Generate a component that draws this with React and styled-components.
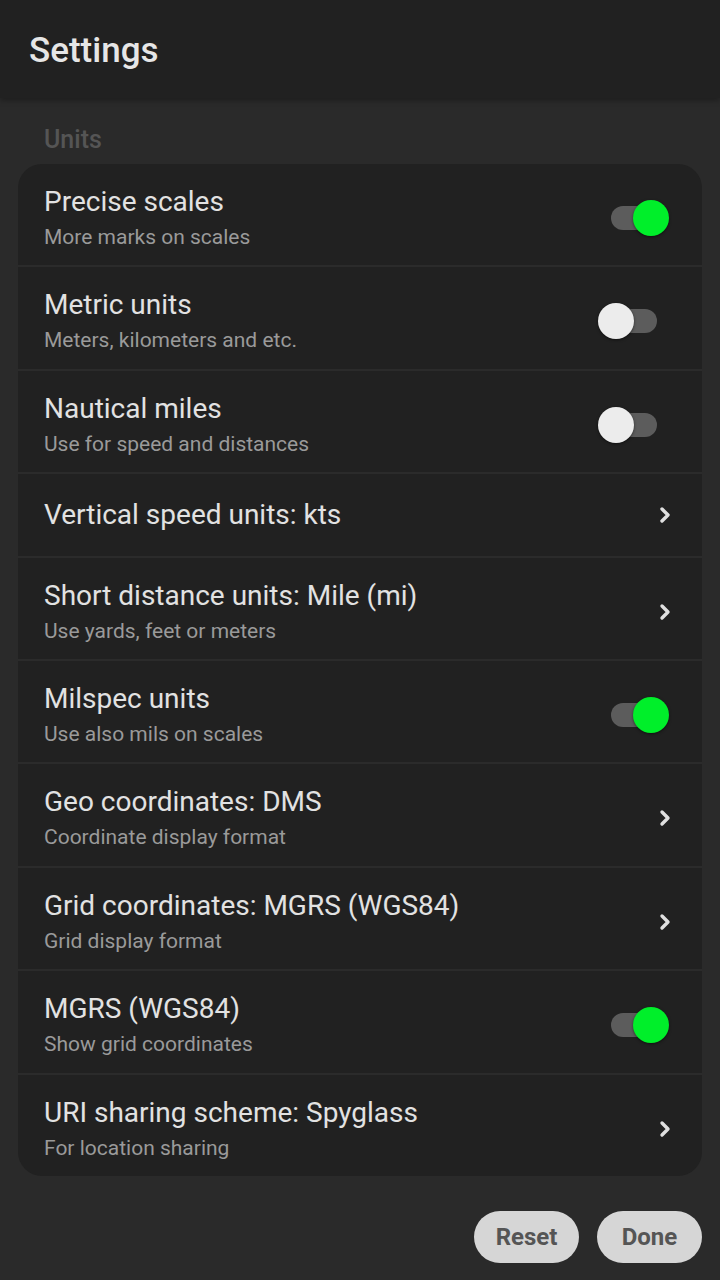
import React from "react";
import styled, { createGlobalStyle } from "styled-components";

const GlobalStyle = createGlobalStyle`
  html, body {
    margin: 0;
    padding: 0;
    background: #2a2a2a;
    font-family: Roboto, "Noto Sans", sans-serif;
  }
`;

const Screen = styled.div`
  width: 720px;
  height: 1280px;
  display: flex;
  flex-direction: column;
  background: #2a2a2a;
  overflow: hidden;
`;

const TopBar = styled.header`
  height: 98px;
  background: #212121;
  display: flex;
  align-items: center;
  padding: 2px 29px 0;
  box-sizing: border-box;
  box-shadow: 0 2px 6px rgba(0, 0, 0, 0.35);
  h1 {
    margin: 0;
    font-size: 35px;
    font-weight: 500;
    color: #e6e6e6;
  }
`;

const Body = styled.main`
  flex: 1;
  padding: 0 18px;
  display: flex;
  flex-direction: column;
`;

const SectionLabel = styled.div`
  font-size: 25px;
  font-weight: 500;
  color: #555;
  padding: 27px 26px 9px;
  line-height: 30px;
`;

const Card = styled.section`
  background: #212121;
  border-radius: 24px;
  overflow: hidden;
`;

const Row = styled.div`
  display: flex;
  align-items: center;
  padding: ${(p) => (p.$single ? "24px 26px 23.4px" : "21px 26px 14.4px")};
  & + & {
    border-top: 2px solid #2b2b2b;
  }
`;

const Texts = styled.div`
  flex: 1;
  min-width: 0;
`;

const Title = styled.div`
  font-size: 28px;
  line-height: 34px;
  color: #e2e2e2;
`;

const Subtitle = styled.div`
  font-size: 21px;
  line-height: 28px;
  margin-top: 4px;
  color: #9a9a9a;
`;

const Track = styled.div`
  position: relative;
  width: 46px;
  height: 24px;
  border-radius: 12px;
  background: #5c5c5c;
  margin-right: 19px;
`;

const Knob = styled.div`
  position: absolute;
  top: -6px;
  left: ${(p) => (p.$on ? "22px" : "-13px")};
  width: 36px;
  height: 36px;
  border-radius: 50%;
  background: ${(p) => (p.$on ? "#00ef2a" : "#ececec")};
  box-shadow: 0 1px 3px rgba(0, 0, 0, 0.5);
`;

const Chevron = styled.svg`
  width: 14px;
  height: 18px;
  margin-right: 4px;
`;

const Actions = styled.div`
  display: flex;
  justify-content: flex-end;
  gap: 18px;
  padding: 35px 0 0;
`;

const Button = styled.button`
  height: 52px;
  padding: 0;
  border: none;
  border-radius: 26px;
  background: #d6d6d6;
  color: #555;
  font-family: Roboto, sans-serif;
  font-weight: 700;
  font-size: 24px;
  width: ${(p) => p.$w}px;
`;

const Switch = ({ on }) => (
  <Track $on={on}>
    <Knob $on={on} />
  </Track>
);

const Arrow = () => (
  <Chevron viewBox="0 0 14 18">
    <path d="M4 3l6 6-6 6" fill="none" stroke="#e0e0e0" strokeWidth="3.4" strokeLinecap="round" strokeLinejoin="round" />
  </Chevron>
);

const items = [
  { title: "Precise scales", sub: "More marks on scales", toggle: true },
  { title: "Metric units", sub: "Meters, kilometers and etc.", toggle: false },
  { title: "Nautical miles", sub: "Use for speed and distances", toggle: false },
  { title: "Vertical speed units: kts" },
  { title: "Short distance units: Mile (mi)", sub: "Use yards, feet or meters" },
  { title: "Milspec units", sub: "Use also mils on scales", toggle: true },
  { title: "Geo coordinates: DMS", sub: "Coordinate display format" },
  { title: "Grid coordinates: MGRS (WGS84)", sub: "Grid display format" },
  { title: "MGRS (WGS84)", sub: "Show grid coordinates", toggle: true },
  { title: "URI sharing scheme: Spyglass", sub: "For location sharing" },
];

export default function App() {
  return (
    <Screen>
      <GlobalStyle />
      <TopBar>
        <h1>Settings</h1>
      </TopBar>
      <Body>
        <SectionLabel>Units</SectionLabel>
        <Card>
          {items.map((it) => (
            <Row key={it.title} $single={!it.sub}>
              <Texts>
                <Title>{it.title}</Title>
                {it.sub && <Subtitle>{it.sub}</Subtitle>}
              </Texts>
              {typeof it.toggle === "boolean" ? <Switch on={it.toggle} /> : <Arrow />}
            </Row>
          ))}
        </Card>
        <Actions>
          <Button $w={105}>Reset</Button>
          <Button $w={105}>Done</Button>
        </Actions>
      </Body>
    </Screen>
  );
}
